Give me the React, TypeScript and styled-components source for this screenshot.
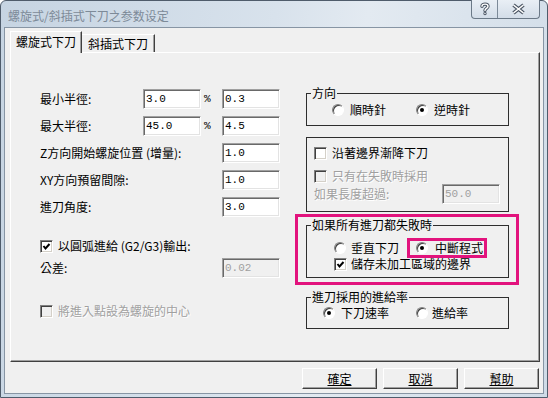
import React from "react";
import styled, { createGlobalStyle, css } from "styled-components";

const UI = `"Noto Sans CJK TC", "Noto Sans CJK SC", "Liberation Sans", sans-serif`;
const MONO = `"Liberation Mono", "Noto Sans CJK TC", monospace`;
const FACE = "#f0f0f0";
const MAGENTA = "#e2137d";

const GlobalStyle = createGlobalStyle`
  html, body { margin: 0; padding: 0; background: #ffffff; }
  body { font-family: ${UI}; font-size: 12px; color: #000; }
`;

const Window = styled.div`
  width: 548px;
  height: 398px;
  box-sizing: border-box;
  border: 1px solid #4f5c6b;
  border-radius: 6px 6px 0 0;
  background: linear-gradient(100deg, #c6d4e2 0%, #d8e2ec 45%, #e3eaf1 60%, #cfdbe7 100%);
  padding: 0 3px 3px;
  display: flex;
  flex-direction: column;
`;

const TitleBar = styled.div`
  height: 26px;
  flex: none;
  display: flex;
  justify-content: space-between;
  align-items: flex-start;
`;

const TitleText = styled.div`
  padding: 2px 0 0 4px;
  line-height: 26px;
  color: #7d8a98;
  font-size: 12px;
  white-space: nowrap;
`;

const Captions = styled.div`
  display: flex;
  margin: -1px 4px 0 0;
  height: 18px;
  border: 1px solid #6b7987;
  border-top: none;
  border-radius: 0 0 4px 4px;
  overflow: hidden;
  background: linear-gradient(#e9eff5, #d3dde8);
`;

const CaptionButton = styled.div<{ $w: number; $sep?: boolean }>`
  width: ${(p) => p.$w}px;
  display: flex;
  align-items: center;
  justify-content: center;
  ${(p) => p.$sep && css`border-right: 1px solid #7c8a98;`}
`;

const Client = styled.div`
  flex: 1;
  border: 1px solid #8795a4;
  background: ${FACE};
  display: flex;
  flex-direction: column;
`;

const TabStrip = styled.div`
  display: flex;
  align-items: flex-end;
  height: 21px;
  margin-top: 3px;
  padding-left: 5px;
`;

const Tab = styled.div<{ $active?: boolean }>`
  position: relative;
  box-sizing: border-box;
  display: flex;
  align-items: center;
  justify-content: center;
  background: ${FACE};
  border-top: 1px solid #ffffff;
  border-left: 1px solid #ffffff;
  border-right: 1px solid #404040;
  box-shadow: inset -1px 0 0 #a0a0a0;
  ${(p) =>
    p.$active
      ? css`
          width: 72px;
          height: 22px;
          margin-bottom: -1px;
          z-index: 1;
          padding-bottom: 2px;
        `
      : css`
          width: 73px;
          height: 18px;
          border-left: none;
        `}
`;

const Panel = styled.div`
  position: relative;
  box-sizing: border-box;
  width: 530px;
  height: 310px;
  margin-left: 5px;
  border: 1px solid;
  border-color: #ffffff #404040 #404040 #ffffff;
  box-shadow: inset -1px -1px 0 #a0a0a0;
  display: flex;
  align-items: flex-start;
  gap: 15px;
  padding-left: 29px;
`;

const LeftCol = styled.div`
  width: 240px;
  padding-top: 36px;
  display: flex;
  flex-direction: column;
`;

const FieldGrid = styled.div<{ $top?: number }>`
  display: grid;
  grid-template-columns: 103px 58px 21px 58px;
  grid-auto-rows: 20px;
  row-gap: 7px;
  margin-top: ${(p) => p.$top ?? 0}px;
`;

const Label = styled.span<{ $wide?: boolean }>`
  align-self: center;
  white-space: nowrap;
  line-height: 14px;
  ${(p) => p.$wide && css`grid-column: 1 / 4;`}
`;

const Percent = styled.span`
  align-self: center;
  padding-left: 3px;
  font-family: ${MONO};
  font-size: 11px;
`;

const Field = styled.input<{ $w?: number }>`
  width: ${(p) => p.$w ?? 58}px;
  height: 20px;
  box-sizing: border-box;
  margin: 0;
  padding: 0 0 0 2px;
  border: 1px solid;
  border-color: #a0a0a0 #ffffff #ffffff #a0a0a0;
  box-shadow: inset 1px 1px 0 #696969, inset -1px -1px 0 #e3e3e3;
  background: #ffffff;
  font-family: ${MONO};
  font-size: 11px;
  color: #000;
  outline: none;
  &:disabled {
    background: ${FACE};
    color: #a0a0a0;
  }
`;

const CheckRow = styled.div<{ $top?: number; $h?: number; $gap?: number; $off?: boolean }>`
  display: flex;
  align-items: center;
  height: ${(p) => p.$h ?? 20}px;
  gap: ${(p) => p.$gap ?? 5}px;
  margin-top: ${(p) => p.$top ?? 0}px;
  line-height: 14px;
  white-space: nowrap;
  ${(p) =>
    p.$off &&
    css`
      color: #a0a0a0;
      text-shadow: 1px 1px 0 #ffffff;
    `}
`;

const Box = styled.span<{ $off?: boolean }>`
  flex: none;
  width: 13px;
  height: 13px;
  box-sizing: border-box;
  display: flex;
  align-items: center;
  justify-content: center;
  border: 1px solid;
  border-color: #808080 #ffffff #ffffff #808080;
  box-shadow: inset 1px 1px 0 #404040, inset -1px -1px 0 #d4d0c8;
  background: ${(p) => (p.$off ? FACE : "#ffffff")};
`;

const RadioDot = styled.span<{ $on?: boolean }>`
  position: relative;
  flex: none;
  width: 12px;
  height: 12px;
  box-sizing: border-box;
  border-radius: 50%;
  border: 1px solid;
  border-color: #808080 #ffffff #ffffff #808080;
  box-shadow: inset 1px 1px 0 #404040;
  background: #ffffff;
  ${(p) =>
    p.$on &&
    css`
      &::after {
        content: "";
        position: absolute;
        left: 3px;
        top: 3px;
        width: 4px;
        height: 4px;
        border-radius: 50%;
        background: #000;
      }
    `}
`;

const RadioItem = styled.label<{ $w?: number; $gap?: number }>`
  display: inline-flex;
  align-items: center;
  gap: ${(p) => p.$gap ?? 6}px;
  line-height: 14px;
  white-space: nowrap;
  ${(p) => p.$w && css`width: ${p.$w}px;`}
`;

const RightCol = styled.div`
  width: 224px;
  padding-top: 40px;
  display: flex;
  flex-direction: column;
`;

const Group = styled.div<{ $h: number; $pl: number; $mt?: number; $bare?: boolean }>`
  position: relative;
  box-sizing: border-box;
  width: 203px;
  height: ${(p) => p.$h}px;
  margin: ${(p) => p.$mt ?? 0}px 0 0 ${(p) => (p.$bare ? 0 : 11)}px;
  border: 1px solid #2e2e2e;
  padding-left: ${(p) => p.$pl}px;
`;

const RowLine = styled.div<{ $h?: number; $top?: number }>`
  display: flex;
  align-items: center;
  height: ${(p) => p.$h ?? 20}px;
  margin-top: ${(p) => p.$top ?? 0}px;
`;

const FullRow = styled(RowLine)`
  height: 100%;
`;

const Legend = styled.span`
  position: absolute;
  top: -8px;
  left: 4px;
  padding: 0 1px;
  line-height: 14px;
  background: ${FACE};
  white-space: nowrap;
`;

const Highlight = styled.div`
  margin: 2px 0 0 0;
  border: 3px solid ${MAGENTA};
  padding: 8px 7px 4px 8px;
`;

const HighlightInline = styled.span`
  display: inline-flex;
  align-items: center;
  height: 20px;
  box-sizing: border-box;
  border: 3px solid ${MAGENTA};
  padding: 0 1px 0 6px;
  gap: 7px;
  line-height: 14px;
`;

const LengthRow = styled.div`
  display: flex;
  align-items: center;
  justify-content: space-between;
  height: 20px;
  padding-right: 8px;
  color: #a0a0a0;
  text-shadow: 1px 1px 0 #ffffff;
  line-height: 14px;
`;

const ButtonRow = styled.div`
  display: flex;
  justify-content: flex-end;
  gap: 6px;
  margin-top: 6px;
  padding-right: 4px;
`;

const PushButton = styled.button`
  width: 75px;
  height: 21px;
  box-sizing: border-box;
  margin: 0;
  padding: 0;
  border: 1px solid;
  border-color: #ffffff #404040 #404040 #ffffff;
  box-shadow: inset -1px -1px 0 #a0a0a0;
  background: ${FACE};
  font-family: ${UI};
  font-size: 12px;
  line-height: 14px;
  color: #000;
  text-decoration: underline;
`;

const Check = ({ on, off }: { on?: boolean; off?: boolean }) => (
  <Box $off={off}>
    {on && (
      <svg width="9" height="9" viewBox="0 0 9 9">
        <polyline points="1.5,4 3.5,6.5 7.5,2" fill="none" stroke="#000" strokeWidth="2" />
      </svg>
    )}
  </Box>
);

const Radio = ({ label, on, w, gap }: { label: string; on?: boolean; w?: number; gap?: number }) => (
  <RadioItem $w={w} $gap={gap}>
    <RadioDot $on={on} />
    {label}
  </RadioItem>
);

const HelpGlyph = () => (
  <svg width="12" height="14" viewBox="0 0 12 14">
    <path d="M3 4.2 C3 1.4 9 1.4 9 4.2 C9 6.4 6 6.4 6 8.6 M6 11.4 L6 11.6" fill="none" stroke="#4d5866" strokeWidth="3.4" strokeLinecap="round" />
    <path d="M3 4.2 C3 1.4 9 1.4 9 4.2 C9 6.4 6 6.4 6 8.6 M6 11.4 L6 11.6" fill="none" stroke="#ffffff" strokeWidth="1.4" strokeLinecap="round" />
  </svg>
);

const CloseGlyph = () => (
  <svg width="15" height="12" viewBox="0 0 15 12">
    <path d="M2.5 2 L12.5 10 M12.5 2 L2.5 10" fill="none" stroke="#4d5866" strokeWidth="3.6" />
    <path d="M2.5 2 L12.5 10 M12.5 2 L2.5 10" fill="none" stroke="#ffffff" strokeWidth="1.6" />
  </svg>
);

export default function App() {
  return (
    <>
      <GlobalStyle />
      <Window>
        <TitleBar>
          <TitleText>螺旋式/斜插式下刀之参数设定</TitleText>
          <Captions>
            <CaptionButton $w={25} $sep>
              <HelpGlyph />
            </CaptionButton>
            <CaptionButton $w={41}>
              <CloseGlyph />
            </CaptionButton>
          </Captions>
        </TitleBar>

        <Client>
          <TabStrip>
            <Tab $active>螺旋式下刀</Tab>
            <Tab>斜插式下刀</Tab>
          </TabStrip>

          <Panel>
            <LeftCol>
              <FieldGrid>
                <Label>最小半徑:</Label>
                <Field readOnly defaultValue="3.0" />
                <Percent>%</Percent>
                <Field readOnly defaultValue="0.3" />
                <Label>最大半徑:</Label>
                <Field readOnly defaultValue="45.0" />
                <Percent>%</Percent>
                <Field readOnly defaultValue="4.5" />
                <Label $wide>Z方向開始螺旋位置 (增量):</Label>
                <Field readOnly defaultValue="1.0" />
                <Label $wide>XY方向預留間隙:</Label>
                <Field readOnly defaultValue="1.0" />
                <Label $wide>進刀角度:</Label>
                <Field readOnly defaultValue="3.0" />
              </FieldGrid>

              <CheckRow $top={19}>
                <Check on />
                以圓弧進給 (G2/G3)輸出:
              </CheckRow>

              <FieldGrid $top={2}>
                <Label $wide>公差:</Label>
                <Field disabled defaultValue="0.02" />
              </FieldGrid>

              <CheckRow $top={23} $off>
                <Check off />
                將進入點設為螺旋的中心
              </CheckRow>
            </LeftCol>

            <RightCol>
              <Group $h={33} $pl={25}>
                <Legend>方向</Legend>
                <FullRow>
                  <Radio label="順時針" w={84} />
                  <Radio label="逆時針" on />
                </FullRow>
              </Group>

              <Group $h={75} $pl={7} $mt={11}>
                <CheckRow $top={7} $h={16}>
                  <Check />
                  沿著邊界漸降下刀
                </CheckRow>
                <CheckRow $top={7} $h={16} $off>
                  <Check off />
                  只有在失敗時採用
                </CheckRow>
                <LengthRow>
                  如果長度超過:
                  <Field disabled defaultValue="50.0" />
                </LengthRow>
              </Group>

              <Highlight>
                <Group $h={53} $pl={27} $bare>
                  <Legend>如果所有進刀都失敗時</Legend>
                  <RowLine $top={12}>
                    <Radio label="垂直下刀" w={73} gap={5} />
                    <HighlightInline>
                      <RadioDot $on />
                      中斷程式
                    </HighlightInline>
                  </RowLine>
                  <CheckRow $top={-2} $h={16} $gap={4}>
                    <Check on />
                    儲存未加工區域的邊界
                  </CheckRow>
                </Group>
              </Highlight>

              <Group $h={32} $pl={16} $mt={12}>
                <Legend>進刀採用的進給率</Legend>
                <FullRow>
                  <Radio label="下刀速率" on w={93} />
                  <Radio label="進給率" gap={4} />
                </FullRow>
              </Group>
            </RightCol>
          </Panel>

          <ButtonRow>
            <PushButton>確定</PushButton>
            <PushButton>取消</PushButton>
            <PushButton>幫助</PushButton>
          </ButtonRow>
        </Client>
      </Window>
    </>
  );
}
